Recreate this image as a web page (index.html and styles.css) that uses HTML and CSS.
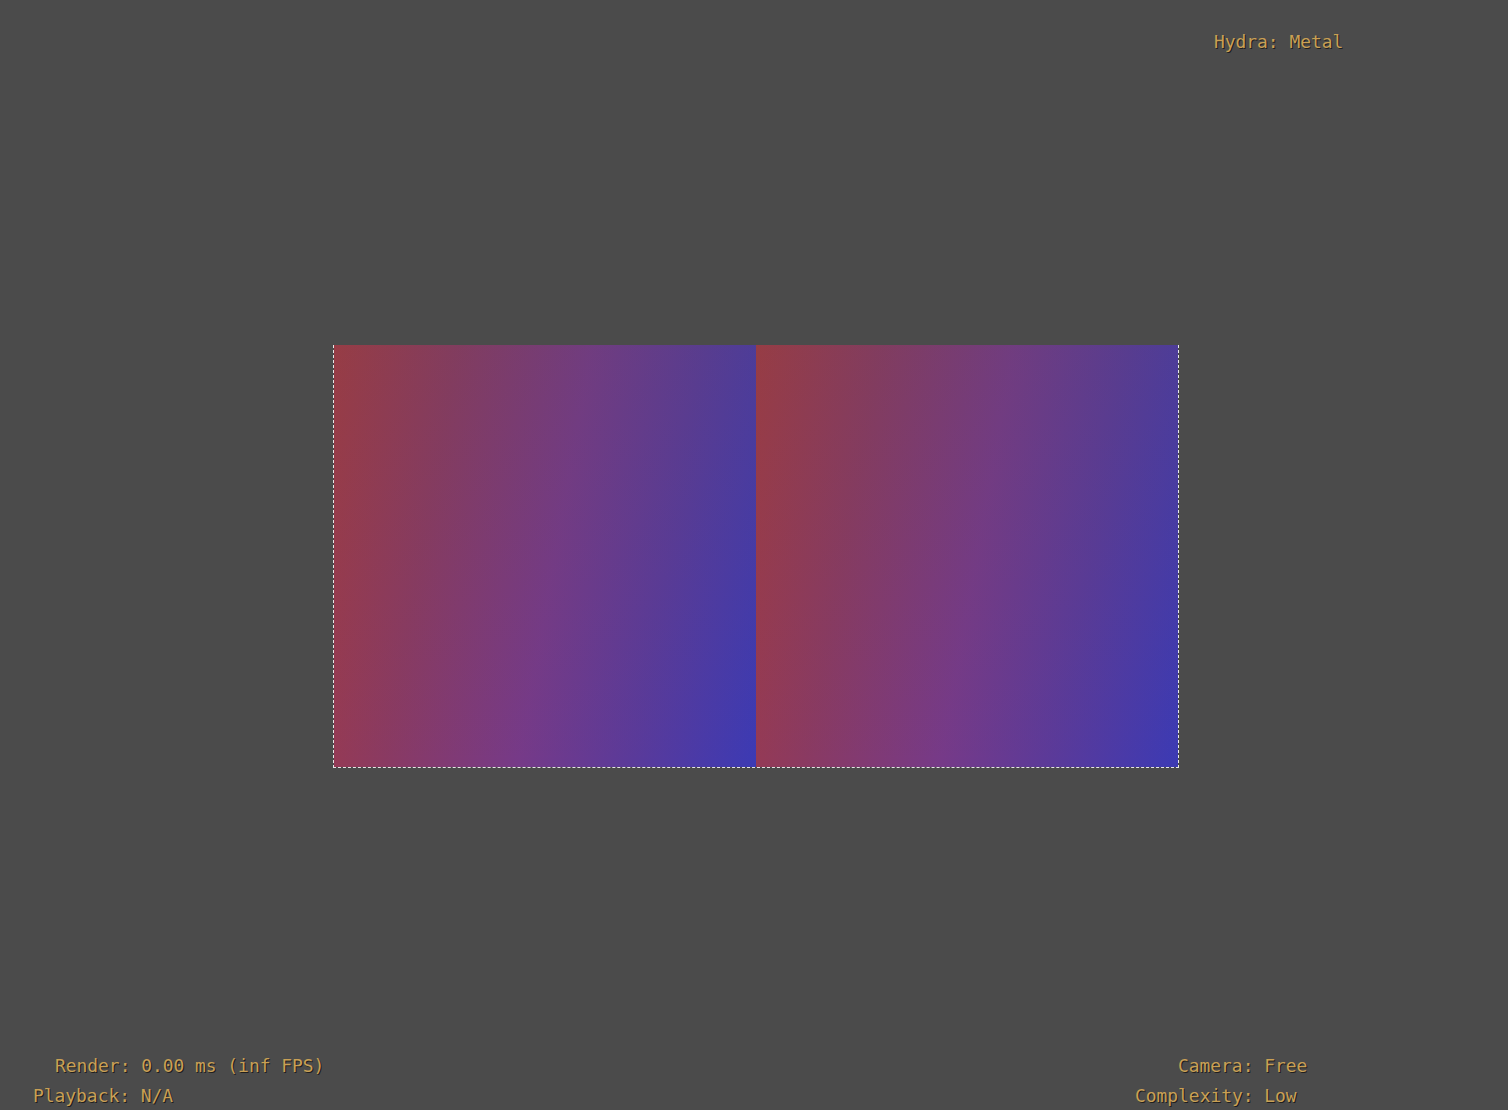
FILE: index.html
```html
<!DOCTYPE html>
<html>
<head>
<meta charset="utf-8">
<link rel="stylesheet" href="styles.css">
</head>
<body>
<div class="viewport">
  <div class="stage">
    <div class="quad"></div>
    <div class="quad"></div>
  </div>
  <div class="hud hud-renderer">Hydra: Metal</div>
  <div class="hud hud-render">Render: 0.00 ms (inf FPS)</div>
  <div class="hud hud-playback">Playback: N/A</div>
  <div class="hud hud-camera">Camera: Free</div>
  <div class="hud hud-complexity">Complexity: Low</div>
</div>
</body>
</html>
```
FILE: styles.css
```css
html, body {
  margin: 0;
  padding: 0;
  background: #4b4b4b;
}
.viewport {
  position: relative;
  width: 1508px;
  height: 1110px;
  display: flex;
  justify-content: center;
  align-items: flex-start;
  padding-top: 345px;
  box-sizing: border-box;
  padding-left: 4px;
}
.stage {
  display: flex;
  border: 1px dashed #e6e6e6;
  border-top: none;
}
.quad {
  width: 422px;
  height: 422px;
  background:
    linear-gradient(to bottom, rgba(75,75,75,0.14), rgba(75,75,75,0)),
    linear-gradient(100deg, #a33a44 0%, #8a3a62 25%, #763a88 52%, #5a3a9a 75%, #3c3ab4 100%);
}
.hud {
  position: absolute;
  font-family: "DejaVu Sans Mono", "Liberation Mono", monospace;
  font-size: 17.9px;
  line-height: 20px;
  color: #c9a055;
  text-shadow: 1px 1px 0 #1e1e1e;
  white-space: pre;
}
.hud-renderer { left: 1214px; top: 32px; }
.hud-render { left: 55px; top: 1056px; }
.hud-playback { left: 33px; top: 1086px; }
.hud-camera { left: 1178px; top: 1056px; }
.hud-complexity { left: 1135px; top: 1086px; }
```
